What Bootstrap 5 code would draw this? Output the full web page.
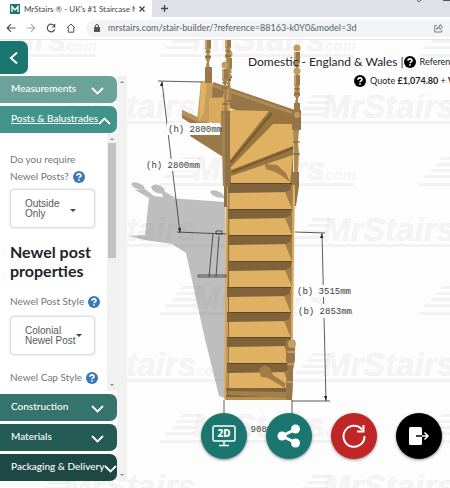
<!DOCTYPE html>
<html lang="en">
<head>
<meta charset="utf-8">
<meta name="viewport" content="width=device-width, initial-scale=1">
<title>MrStairs - Stair builder</title>
<link href="https://cdn.jsdelivr.net/npm/bootstrap@5.3.0/dist/css/bootstrap.min.css" rel="stylesheet">
<style>
body{font-family:Lato,"Open Sans",sans-serif;font-size:10px;line-height:16px;color:#212529;background:#fdfdfd}
button{border:0;padding:0;background:none;color:inherit}
svg{display:block;flex:none}
.tabstrip{height:17px;background:#dee1e6}
.site-tab{width:152px;height:17px;padding-left:10px;padding-right:7px;background:#fff;border-radius:0 0 2px 0;font-size:8px;color:#45484c}
.tools{height:23px;padding:3px 0 3px 6px;gap:10px;background:#fff;border-bottom:1px solid #e4e4e4;color:#4d5156}
.addr{height:17px;background:#f1f3f4;border-radius:9px 0 0 9px;padding-left:8px;padding-right:7px}
.addr input{min-width:0;border:0;background:none;outline:0;padding:0;font-size:9px;line-height:16px;color:#5a5f64}
.scene{left:0;top:0;width:100%;height:100%}
.scene text{font-family:"Liberation Mono",monospace;font-size:9px;fill:#3c3c3c}
.scene .wm{font-family:"Liberation Sans",Arial,sans-serif;font-weight:700;font-style:italic;fill:inherit}
.scene .big{font-size:33px;stroke:#777;stroke-opacity:.05}.scene .dom{font-size:15px}
.side{width:128px;padding-top:1px}
.back{width:28px;height:33px;background:#1a766e;border-radius:0 7px 7px 0;color:#fff}
.stack{margin-top:2px}
.panels{width:117px}
.hd{height:27px;padding:0 13px 3px 11px;border-radius:0 7px 7px 0;color:#fff;font-size:10px;font-weight:500;white-space:nowrap;width:100%;text-align:left}
.hd svg{margin-top:6px}
.hd.tight{padding-right:0}.hd.snug{padding-right:7px}
.c1{background:#6ba39b}.c2{background:#42938a}.c3{background:#35746c}.c4{background:#245b55}.c5{background:#1d4844}
.hd+.hd{margin-top:3px}
.body-area{height:258px;margin-bottom:3px;background:#fff;overflow:hidden}
.opts{padding:18px 0 0 10px;color:#747679}
.opts label,.opts .cap{line-height:17px;font-size:10px;white-space:nowrap}
.pick{width:85px;height:39px;border:1px solid #ddd;border-radius:4px;box-shadow:0 0 2px #ccc;background:#fff;padding:0 18px 0 14px;font-family:"Liberation Sans",Arial,sans-serif;font-size:10px;line-height:10px;color:#55585b;text-align:left}
.opts h2{font-size:16px;line-height:19px;font-weight:700;color:#212529;margin:14px 0 13px}
.second{margin-top:6px}.cap{margin-top:14px}
.caret{border:3px solid transparent;border-top-color:#444;border-bottom:0;flex:none}
.caret.up{border:2px solid transparent;border-bottom-color:#888;border-top:0}
.caret.dn{border:2px solid transparent;border-top-color:#888;border-bottom:0}
.bar{width:10px;background:#f1f1f1;padding:5px 0}
.thumb{width:8px;height:115px;background:#c1c3c2;margin-top:3px}
.info{left:248px;right:0;top:13px;white-space:nowrap}
.info .title-line{font-size:12px;line-height:18px}
.quote{padding-left:106px;margin-top:2px;font-size:9px;line-height:16px}
.info small{font-size:9px}
.acts{right:8px;bottom:29px;gap:19px}
.round{width:46px;height:46px;border-radius:50%;background:#1a766e;box-shadow:0 1px 3px #888}
.red{background:#c12627}.black{background:#000}
</style>
<script src="https://cdn.jsdelivr.net/npm/bootstrap@5.3.0/dist/js/bootstrap.bundle.min.js"></script>
</head>
<body class="d-flex flex-column vh-100 overflow-hidden">
<header>
  <div class="tabstrip d-flex align-items-center overflow-hidden">
    <div class="site-tab d-flex align-items-center">
      <svg width="10" height="10" viewBox="0 0 10 10"><path fill="#1a766e" d="M0 0h10v10H0z"/><path d="M2 8V2.5l3 3.5 3-3.5V8" fill="none" stroke="#fff" stroke-width="1.3"/></svg>
      <span class="flex-grow-1 overflow-hidden text-nowrap ms-1">MrStairs ® - UK's #1 Staircase M</span>
      <button aria-label="Close tab" class="ms-1"><svg width="6" height="6" viewBox="0 0 6 6"><path d="M.5.5l5 5m0-5l-5 5" stroke="#444" stroke-width="1.2"/></svg></button>
    </div>
    <button aria-label="New tab" class="ms-2"><svg width="9" height="9" viewBox="0 0 9 9"><path d="M4.500 1v7M1 4.500h7" stroke="#444" stroke-width="1.3"/></svg></button>
    <svg class="ms-auto align-self-start" width="36" height="3" viewBox="0 0 36 3"><path d="M3 0l2 2 2-2M29 .5h7" stroke="#555" fill="none"/></svg>
  </div>
  <div class="tools d-flex align-items-center">
    <button aria-label="Back"><svg width="10" height="10" viewBox="0 0 10 10"><path d="M9.500 5H1.500M5 1.200L1.200 5 5 8.800" stroke="#4d5156" fill="none" stroke-width="1.200"/></svg></button>
    <button aria-label="Forward"><svg width="10" height="10" viewBox="0 0 9 10"><path d="M0 5h8M4.500 1.200L8.200 5 4.500 8.800" stroke="#aaa" fill="none" stroke-width="1.100"/></svg></button>
    <button aria-label="Reload"><svg width="10" height="10" viewBox="0 0 9 10"><path d="M7.800 3A3.800 3.800 0 1 0 8.200 6.200M8.200 1v3H5.200" stroke="#4d5156" fill="none" stroke-width="1.200"/></svg></button>
    <button aria-label="Home"><svg width="10" height="10" viewBox="0 0 9 10"><path d="M.5 5l4-4 4 4M1.800 4.500v4.700h5.400V4.500" stroke="#4d5156" fill="none"/></svg></button>
    <div class="addr d-flex align-items-center flex-grow-1">
      <svg width="6" height="8" viewBox="0 0 6 8"><path d="M0 3h6v5H0z" fill="#555"/><path d="M1.500 3.500V2a1.500 1.500 0 0 1 3 0v1.500" fill="none" stroke="#555"/></svg>
      <input class="flex-grow-1 ms-2" aria-label="Address" value="mrstairs.com/stair-builder/?reference=88163-k0Y0&amp;model=3d">
      <button aria-label="Share page"><svg width="9" height="10" viewBox="0 0 9 10"><path d="M3 2.500H.7v6.500h7V7M2.500 6.500C3 4 4.500 3.500 6 3.500V1.500L8.700 4 6 6.500v-1.600C4.500 4.900 3.500 5.200 2.500 6.500z" fill="none" stroke="#666" stroke-width=".8"/></svg></button>
    </div>
  </div>
</header>
<main class="position-relative flex-grow-1 overflow-hidden">
  <svg class="scene position-absolute" viewBox="0 40 450 448" preserveAspectRatio="xMinYMin slice" role="img" aria-label="3D stair model">
    <defs>
      <g id="logo"><path d="M0 29h194v3H0zM6 21h29l-1 3H4zM13 15h24l-1 3H11zM18 9h21l-1 3H16zM23 3h18l-1 3H21z"/>
        <text class="wm big" x="33" y="26">MrStairs</text></g>
      <g id="step"><path d="M228 0h64v26h-64z" fill="#e0b063"/><path d="M228 0h64l-1 9-63 1z" fill="#80633a"/><path d="M228 0h64v1h-64z" fill="#5f4828"/><path d="M285 9l7-3v20z" fill="#a27f49"/></g>
      <g id="post"><path d="M-3 0h6v10h-6z" fill="#9a7a48"/><circle cy="-4" r="3.500" fill="#c19b5d"/><path d="M-3 10h6l-2 5 2 4-2 5 1 10 1 10h-6l1-10 1-10-2-5 2-4z" fill="#a9874f"/><path d="M-3 0h2v10h-2zM-2 25h1v18h-1z" fill="#c9a366"/><path d="M-3 14h6M-3 19h6M-3 43h6" stroke="#765d37"/></g>
    </defs>
    <path fill="#fdfdfd" d="M0 40h450v448H0z"/>
    <path d="M149 198l-14-8 10-1 9 7 15 2 56 4v196l-6-2-14-57-19-86-14-9-27-4-16-4 16-1z" fill="#bebebe"/>
    <g fill="#bebebe"><ellipse cx="138" cy="186" rx="7" ry="3" transform="rotate(20 138 186)"/><ellipse cx="158" cy="189" rx="7" ry="4" transform="rotate(20 158 189)"/><path d="M160 189l16 9-12 1z"/><ellipse cx="217" cy="194" rx="7" ry="3" transform="rotate(20 217 194)"/><path d="M218 193l9 4v5z"/></g>
    <g fill="#777" fill-opacity=".08">
      <use href="#logo" x="-99" y="25"/><use href="#logo" x="160" y="25"/><use href="#logo" x="419" y="25"/>
      <use href="#logo" x="31" y="92"/><use href="#logo" x="290" y="92"/>
      <use href="#logo" x="160" y="154"/><use href="#logo" x="419" y="154"/>
      <use href="#logo" x="31" y="215"/><use href="#logo" x="290" y="215"/>
      <use href="#logo" x="160" y="283"/><use href="#logo" x="419" y="283"/>
      <use href="#logo" x="31" y="350"/><use href="#logo" x="290" y="350"/>
      <use href="#logo" x="160" y="411"/><use href="#logo" x="419" y="411"/>
      <use href="#logo" x="31" y="472"/><use href="#logo" x="290" y="472"/>
      <g><text class="wm dom" x="62" y="51">.com</text><text class="wm dom" x="321" y="51">.com</text><text class="wm dom" x="192" y="118">.com</text><text class="wm dom" x="321" y="180">.com</text><text class="wm dom" x="192" y="241">.com</text><text class="wm dom" x="192" y="376">.com</text><text class="wm dom" x="321" y="437">.com</text></g>
    </g>
    <!-- winder turn -->
    <path d="M182 110l41 19v28l-33-21v-13l-8-5z" fill="#9a7948"/><path d="M182 110l41 19v5l-41-19z" fill="#b69055"/>
    <path d="M201 81h10l8 14-6 27-16-1z" fill="#c79d59"/><path d="M201 81l6 1-3 31-5 8z" fill="#e0b063"/>
    <path d="M213 82l82 28v18l-66-20-17-10z" fill="#967548"/><path d="M213 84l82 28v3l-82-28z" fill="#b18b52"/>
    <path d="M209 98l21-1v30l-21-5z" fill="#d9aa5f"/>
    <path d="M230 110h42l21 10v64h-63z" fill="#98753f"/>
    <path d="M230 110l39 1-39 49z" fill="#e0b063"/><path d="M273 124h20v22l-62 24v-3z" fill="#e0b063"/><path d="M293 155l-3 29h-59v-8z" fill="#e0b063"/><path d="M265 164l12 1 9 8 4 9-8-6-7-4-9-3z" fill="#a37d43"/>
    <path d="M272 113l-41 49M293 148l-61 24" stroke="#765a32" stroke-width="2"/>
    <!-- flight -->
    <path d="M226 184h68l-2 216h-67z" fill="#b88f4f"/>
    <use href="#step" y="183"/><use href="#step" y="209"/><use href="#step" y="235"/><use href="#step" y="261"/><use href="#step" x="-1" y="287"/><use href="#step" x="-1" y="312"/><use href="#step" x="-1" y="337"/><use href="#step" x="-1" y="363"/>
    <path d="M226 388h64v9h-64z" fill="#80633a"/><path d="M226 391l60 1v6l-60-3z" fill="#a37f49"/>
    <path d="M227 183l-2 216M294 183l-3 216" stroke="#d7aa63" stroke-width="2"/><path d="M229 185l-1 212" stroke="#7e633b" stroke-width="1"/>
    <path d="M259 369l6-4 5 3 3 7 12 8v5l-17-10-7-1z" fill="#a37d43"/>
    <path d="M286 340h9v20l-2 10v13l-1 17h-6v-17l2-13-2-10z" fill="#98784a"/><circle cx="292" cy="344" r="4" fill="#c9a05e"/><path d="M287 352h8M288 364h6M287 382h6" stroke="#c29b5e" stroke-width="2"/>
    <path d="M221 111h9v76h-3v20h-3v-20z" fill="#8f7245"/><path d="M221 111h4v75h-2z" fill="#a38351"/>
    <path d="M292 110h9v20h-9zM292 172h7v14l-3 20h-3z" fill="#94754a"/><path d="M293 130h6l-1 12 1 12-1 18h-4z" fill="#ad8a52"/>
    <path d="M294 185v22" stroke="#dcb269" stroke-width="2"/>
    <use href="#post" x="208" y="38"/><path d="M205 67h7v16h-7z" fill="#98784a"/>
    <use href="#post" x="229" y="58"/><use href="#post" x="228" y="37"/><use href="#post" x="225" y="69"/>
    <use href="#post" x="297" y="52"/><use href="#post" x="297" y="75"/><path d="M294 103h6v15h-6z" fill="#9a7a48"/><circle cx="297" cy="115" r="3" fill="#c19b5d"/>
    <path d="M293 142h7M293 154h7M222 104h8" stroke="#735a37"/>
    <!-- dimension lines -->
    <g stroke="#333" fill="none" stroke-width=".8"><path d="M158 81l44 1M162 82l18 151M177 232l49 2M213 234l-4 43M219 236l-3 41M198 275h28v2h-28zM216 231h6v3h-6z"/><path d="M295 232l30 1M322 233l4 168M292 401h38M224 400v20M292 400v20"/></g>
    <path d="M162 81l-2 5h3zM180 233l-2-5h3zM322 233l-2 5h3zM326 401l-2-5h3z" fill="#222"/>
    <path d="M167 123h53v12h-53zM145 159h53v12h-53zM296 285h54v12h-54zM297 304h54v14h-54z" fill="#fdfdfd"/>
    <text x="168" y="132">(h) 2800mm</text><text x="146" y="168">(h) 2800mm</text><text x="297" y="294">(b) 3515mm</text><text x="298" y="314">(b) 2853mm</text><text x="229" y="432">(b) 908mm</text>
  </svg>
  <aside class="side position-relative">
    <button class="back d-flex align-items-center justify-content-center" aria-label="Go back"><svg width="10" height="14" viewBox="0 0 10 14"><path d="M8 1.500L2 7l6 5.500" fill="none" stroke="#fff" stroke-width="2"/></svg></button>
    <div class="stack d-flex">
      <div class="panels">
        <button class="hd c1 d-flex align-items-center justify-content-between">Measurements <svg width="13" height="8" viewBox="0 0 13 8"><path d="M1 1l5.500 5.500L12 1" fill="none" stroke="#fff" stroke-width="1.800"/></svg></button>
        <button class="hd snug c2 d-flex align-items-center justify-content-between"><u>Posts &amp; Balustrades</u> <svg width="13" height="8" viewBox="0 0 13 8"><path d="M1 7l5.500-5.500L12 7" fill="none" stroke="#fff" stroke-width="1.800"/></svg></button>
        <section class="body-area d-flex justify-content-between">
          <div class="opts">
            <label for="need">Do you require<br><span class="d-inline-flex align-items-center gap-1">Newel Posts? <svg width="12" height="12" viewBox="0 0 12 12"><use href="#qm" fill="#3a78b5"/></svg></span></label>
            <button id="need" class="pick d-flex align-items-center justify-content-between mt-1"><span>Outside<br>Only</span><span class="caret mt-1"></span></button>
            <h2>Newel post<br>properties</h2>
            <label for="style" class="d-flex align-items-center gap-1">Newel Post Style <svg width="12" height="12" viewBox="0 0 12 12"><use href="#qm" fill="#3a78b5"/></svg></label>
            <button id="style" class="pick second d-flex align-items-center justify-content-between"><span class="text-nowrap">Colonial<br>Newel Post</span><span class="caret"></span></button>
            <div class="cap d-flex align-items-center gap-1">Newel Cap Style <svg width="12" height="12" viewBox="0 0 12 12"><use href="#qm" fill="#3a78b5"/></svg></div>
          </div>
          <div class="bar d-flex flex-column align-items-center"><span class="caret up"></span><div class="thumb"></div><span class="caret dn mt-auto"></span></div>
        </section>
        <button class="hd c3 d-flex align-items-center justify-content-between">Construction <svg width="13" height="8" viewBox="0 0 13 8"><path d="M1 1l5.500 5.500L12 1" fill="none" stroke="#fff" stroke-width="1.800"/></svg></button>
        <button class="hd c4 d-flex align-items-center justify-content-between">Materials <svg width="13" height="8" viewBox="0 0 13 8"><path d="M1 1l5.500 5.500L12 1" fill="none" stroke="#fff" stroke-width="1.800"/></svg></button>
        <button class="hd tight c5 d-flex align-items-center justify-content-between">Packaging &amp; Delivery <svg width="13" height="8" viewBox="0 0 13 8"><path d="M1 1l5.500 5.500L12 1" fill="none" stroke="#fff" stroke-width="1.800"/></svg></button>
      </div>
      <div class="bar d-flex flex-column align-items-center"><span class="caret up"></span><span class="caret dn mt-auto"></span></div>
    </div>
  </aside>
  <svg width="0" height="0" class="position-absolute"><defs><g id="qm"><circle cx="6" cy="6" r="6"/><path d="M4 4.700C4 2.200 8.200 2.300 8 4.600 7.900 5.900 6 5.800 6 7.300M6 8.300v1.500" fill="none" stroke="#fff" stroke-width="1.600"/></g></defs></svg>
  <div class="info position-absolute overflow-hidden">
    <div class="title-line d-flex align-items-center"><span>Domestic - England &amp; Wales |</span><svg width="12" height="12" viewBox="0 0 12 12"><use href="#qm"/></svg><small class="ms-1">Reference 88163</small></div>
    <div class="quote d-flex align-items-center gap-1"><svg width="12" height="12" viewBox="0 0 12 12"><use href="#qm"/></svg><span>Quote <b>£1,074.80</b> + <b>VAT</b></span></div>
  </div>
  <nav class="acts position-absolute d-flex" aria-label="Model actions">
    <button class="round d-flex align-items-center justify-content-center" aria-label="2D view"><svg width="24" height="22" viewBox="0 0 24 22"><rect x="1" y="1" width="22" height="15" rx="1.500" fill="none" stroke="#fff" stroke-width="1.500"/><path d="M12 16v4M7 20.500h10" stroke="#fff" stroke-width="1.500"/><text x="12" y="12" text-anchor="middle" font-family="Noto Sans, sans-serif" font-size="10" font-weight="800" fill="#fff">2D</text></svg></button>
    <button class="round d-flex align-items-center justify-content-center" aria-label="Share"><svg width="24" height="24" viewBox="0 0 24 24"><path d="M19 5L5 12l14 7" fill="none" stroke="#fff" stroke-width="3"/><g fill="#fff"><circle cx="18.500" cy="5" r="4.500"/><circle cx="5" cy="12" r="4.500"/><circle cx="18.500" cy="19" r="4.500"/></g></svg></button>
    <button class="round red d-flex align-items-center justify-content-center" aria-label="Reset"><svg width="24" height="24" viewBox="0 0 24 24"><path d="M20 5.500A10.500 10.500 0 1 0 22.500 12M21.500 1v6.500H15" fill="none" stroke="#fff" stroke-width="2"/></svg></button>
    <button class="round black d-flex align-items-center justify-content-center" aria-label="Exit"><svg width="22" height="20" viewBox="0 0 22 20"><rect x="1" y="1" width="13" height="18" rx="1.500" fill="#fff"/><path d="M8 10h6" stroke="#000" stroke-width="1.500"/><path d="M14 10h6M16.500 6.500L20 10l-3.500 3.500" stroke="#fff" fill="none" stroke-width="1.500"/></svg></button>
  </nav>
</main>
</body>
</html>
